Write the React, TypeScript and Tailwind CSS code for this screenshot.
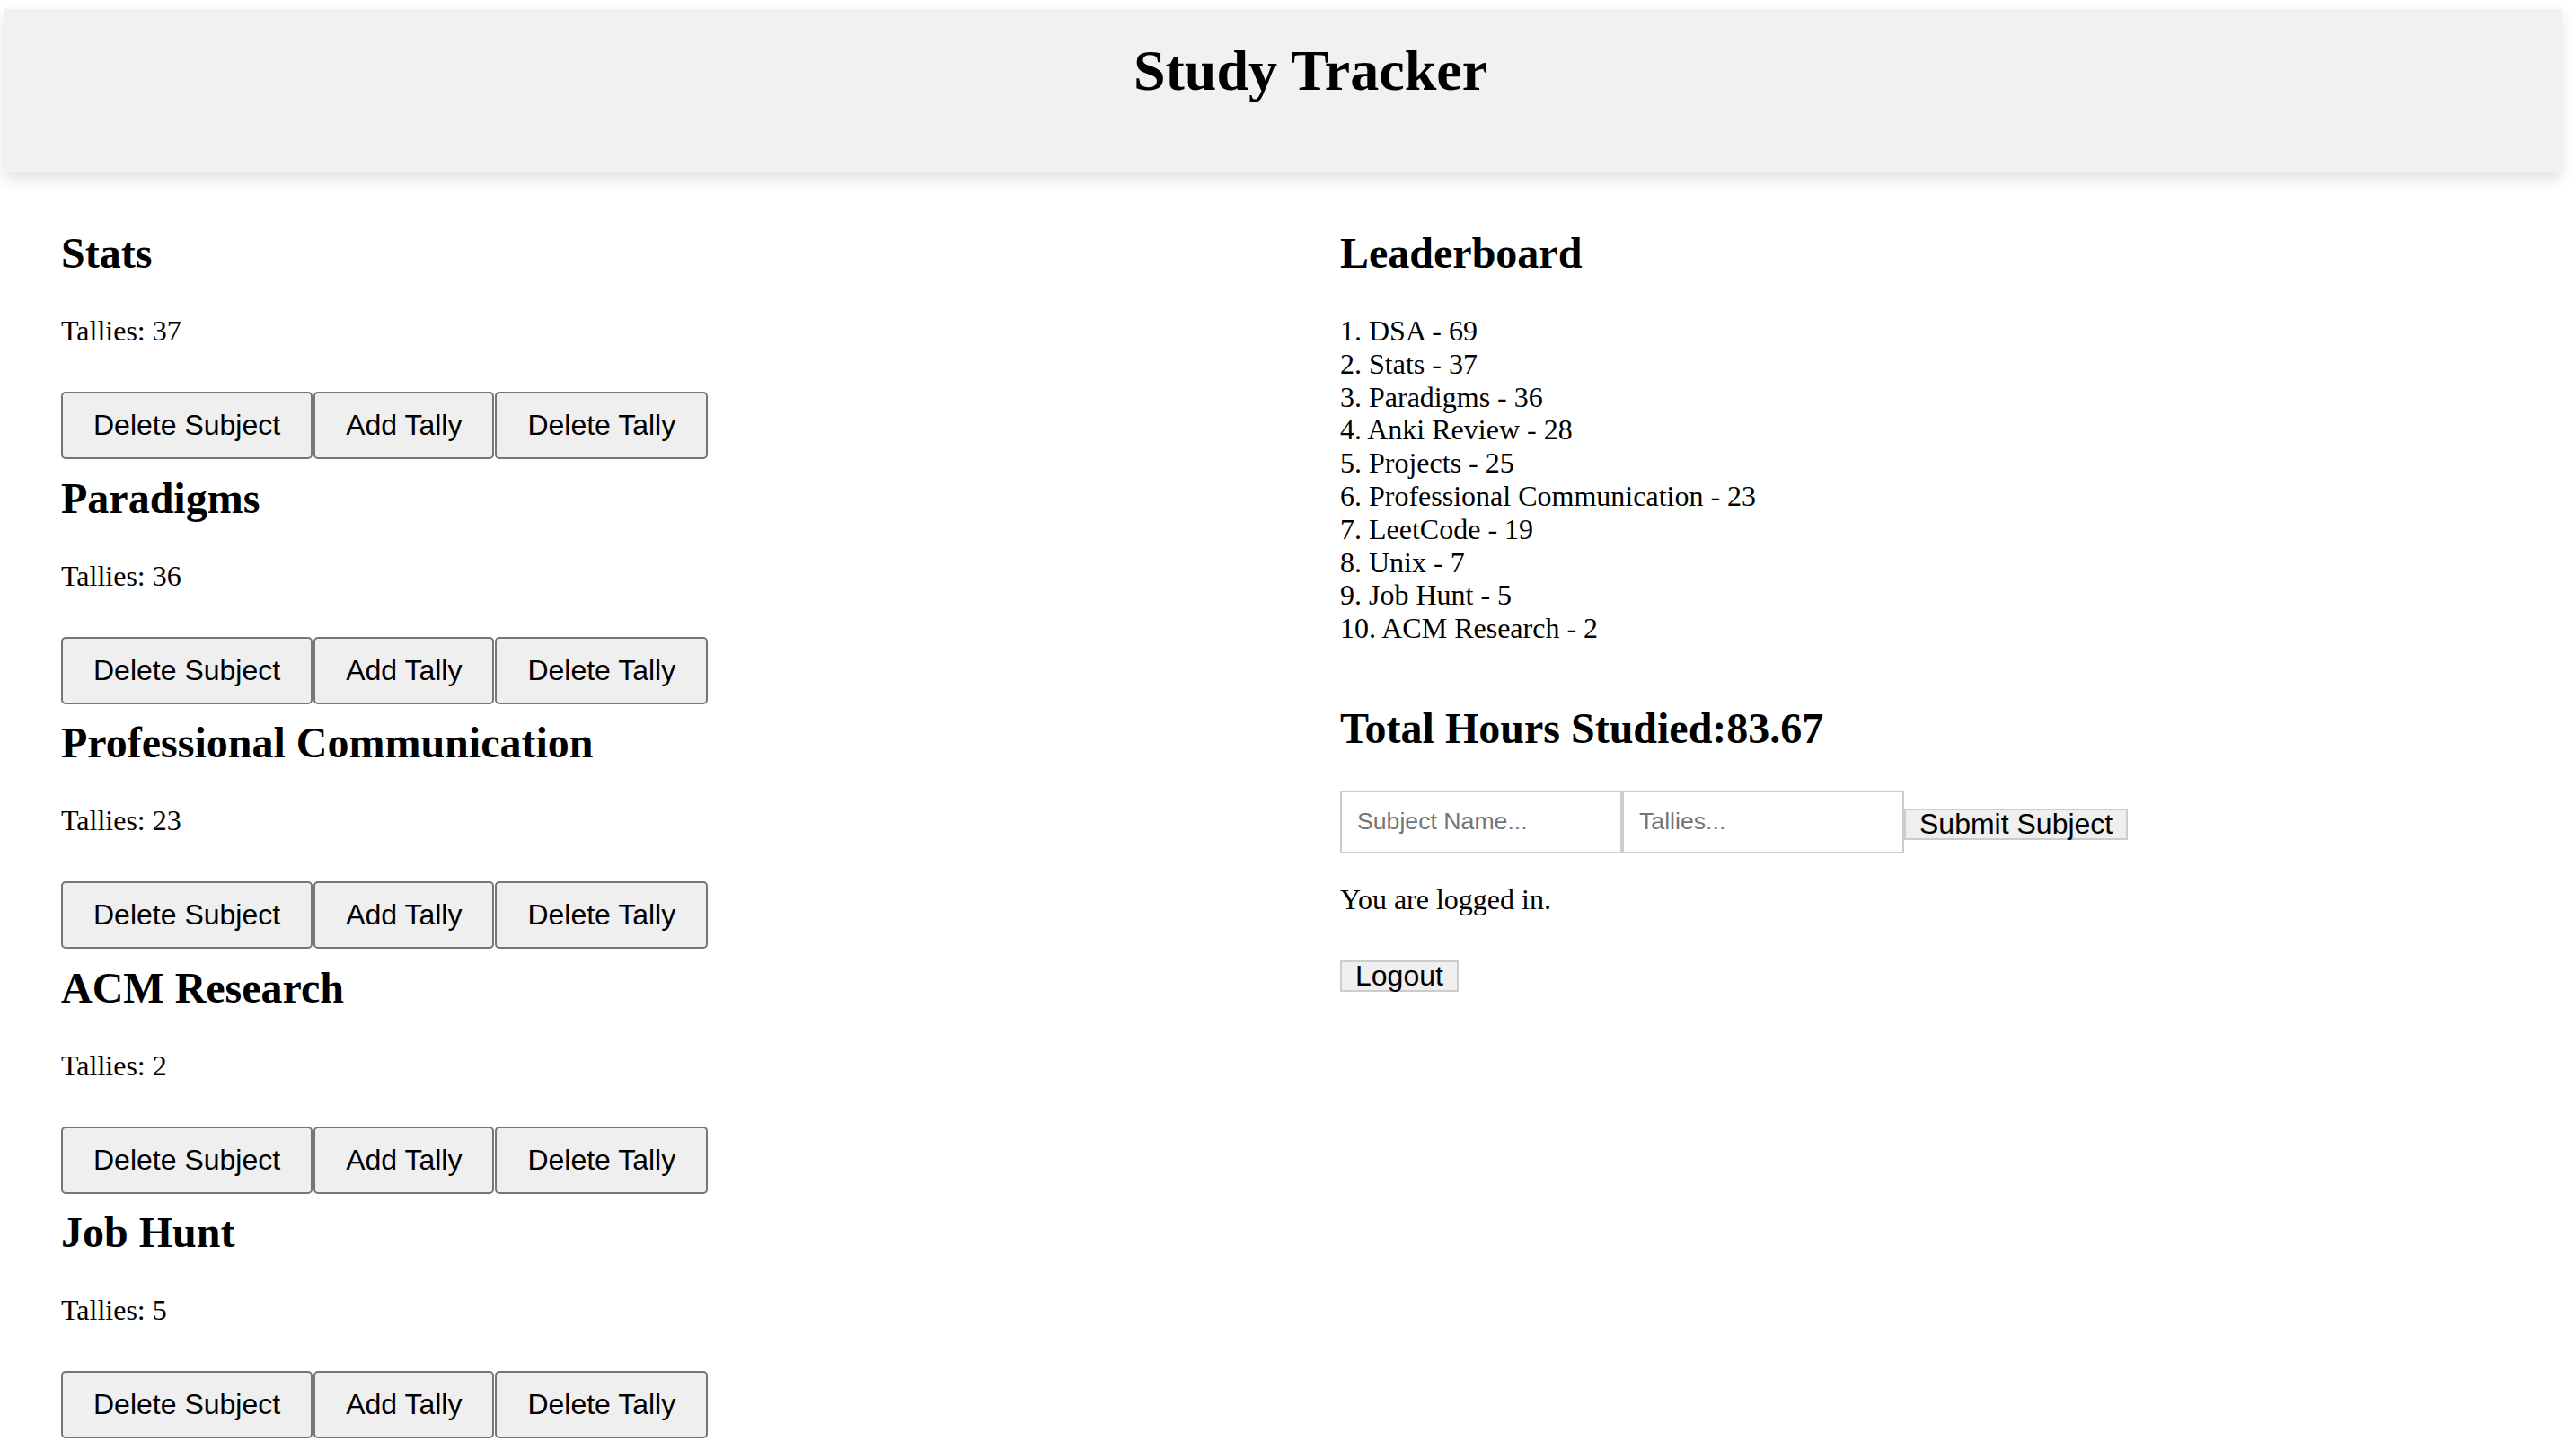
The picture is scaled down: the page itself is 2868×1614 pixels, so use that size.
import React from "react";

const subjects = [
  { name: "Stats", tallies: 37 },
  { name: "Paradigms", tallies: 36 },
  { name: "Professional Communication", tallies: 23 },
  { name: "ACM Research", tallies: 2 },
  { name: "Job Hunt", tallies: 5 },
];

const leaderboard = [
  "1. DSA - 69",
  "2. Stats - 37",
  "3. Paradigms - 36",
  "4. Anki Review - 28",
  "5. Projects - 25",
  "6. Professional Communication - 23",
  "7. LeetCode - 19",
  "8. Unix - 7",
  "9. Job Hunt - 5",
  "10. ACM Research - 2",
];

function TallyButton({ children }: { children: React.ReactNode }) {
  return (
    <button className="h-[75px] px-[34px] border-2 border-[#767676] rounded-[5px] bg-[#efefef] text-black text-[32px] leading-[37px] font-['Liberation_Sans',Arial,sans-serif] whitespace-nowrap">
      {children}
    </button>
  );
}

export default function App() {
  return (
    <div className="min-h-screen bg-white text-black font-['Liberation_Serif','Times_New_Roman',serif]">
      <header className="ml-[4px] mr-[16px] mt-[10px] h-[181px] bg-[#f1f1f1] shadow-[0_8px_16px_rgba(0,0,0,0.12)] pt-[33px] pl-[62px] text-center">
        <h1 className="text-[64px] font-bold leading-[71px]">Study Tracker</h1>
      </header>

      <div className="flex pl-[68px] pt-[63px]">
        <div className="w-[1424px] shrink-0">
          {subjects.map((s) => (
            <div key={s.name} className="mb-[15.5px]">
              <h2 className="text-[48px] font-bold leading-[55px] mb-[41px]">{s.name}</h2>
              <p className="text-[32px] leading-[37px] mb-[49px]">Tallies: {s.tallies}</p>
              <div className="flex gap-[1px]">
                <TallyButton>Delete Subject</TallyButton>
                <TallyButton>Add Tally</TallyButton>
                <TallyButton>Delete Tally</TallyButton>
              </div>
            </div>
          ))}
        </div>

        <div className="flex-1">
          <h2 className="text-[48px] font-bold leading-[55px] mb-[41px]">Leaderboard</h2>
          <div className="text-[32px] leading-[36.8px]">
            {leaderboard.map((l) => (
              <div key={l}>{l}</div>
            ))}
          </div>
          <h2 className="text-[48px] font-bold leading-[55px] mt-[65px] mb-[42px]">Total Hours Studied:83.67</h2>
          <div className="flex items-start">
            <input
              placeholder="Subject Name..."
              className="h-[70px] w-[314px] border-2 border-[#cccccc] pl-[17px] pr-[8px] text-[26.67px] font-['Liberation_Sans',Arial,sans-serif] placeholder:text-[#757575] outline-none"
            />
            <input
              placeholder="Tallies..."
              className="h-[70px] w-[314px] border-2 border-[#cccccc] pl-[17px] pr-[8px] text-[26.67px] font-['Liberation_Sans',Arial,sans-serif] placeholder:text-[#757575] outline-none"
            />
            <button className="mt-[20px] h-[35px] px-[15px] border-2 border-[#cccccc] bg-[#efefef] text-black text-[32px] leading-[31px] font-['Liberation_Sans',Arial,sans-serif] whitespace-nowrap">
              Submit Subject
            </button>
          </div>
          <p className="text-[32px] leading-[37px] mt-[33px]">You are logged in.</p>
          <button className="mt-[49px] h-[35px] px-[15px] border-2 border-[#cccccc] bg-[#efefef] text-black text-[32px] leading-[31px] font-['Liberation_Sans',Arial,sans-serif] whitespace-nowrap">
            Logout
          </button>
        </div>
      </div>
    </div>
  );
}
